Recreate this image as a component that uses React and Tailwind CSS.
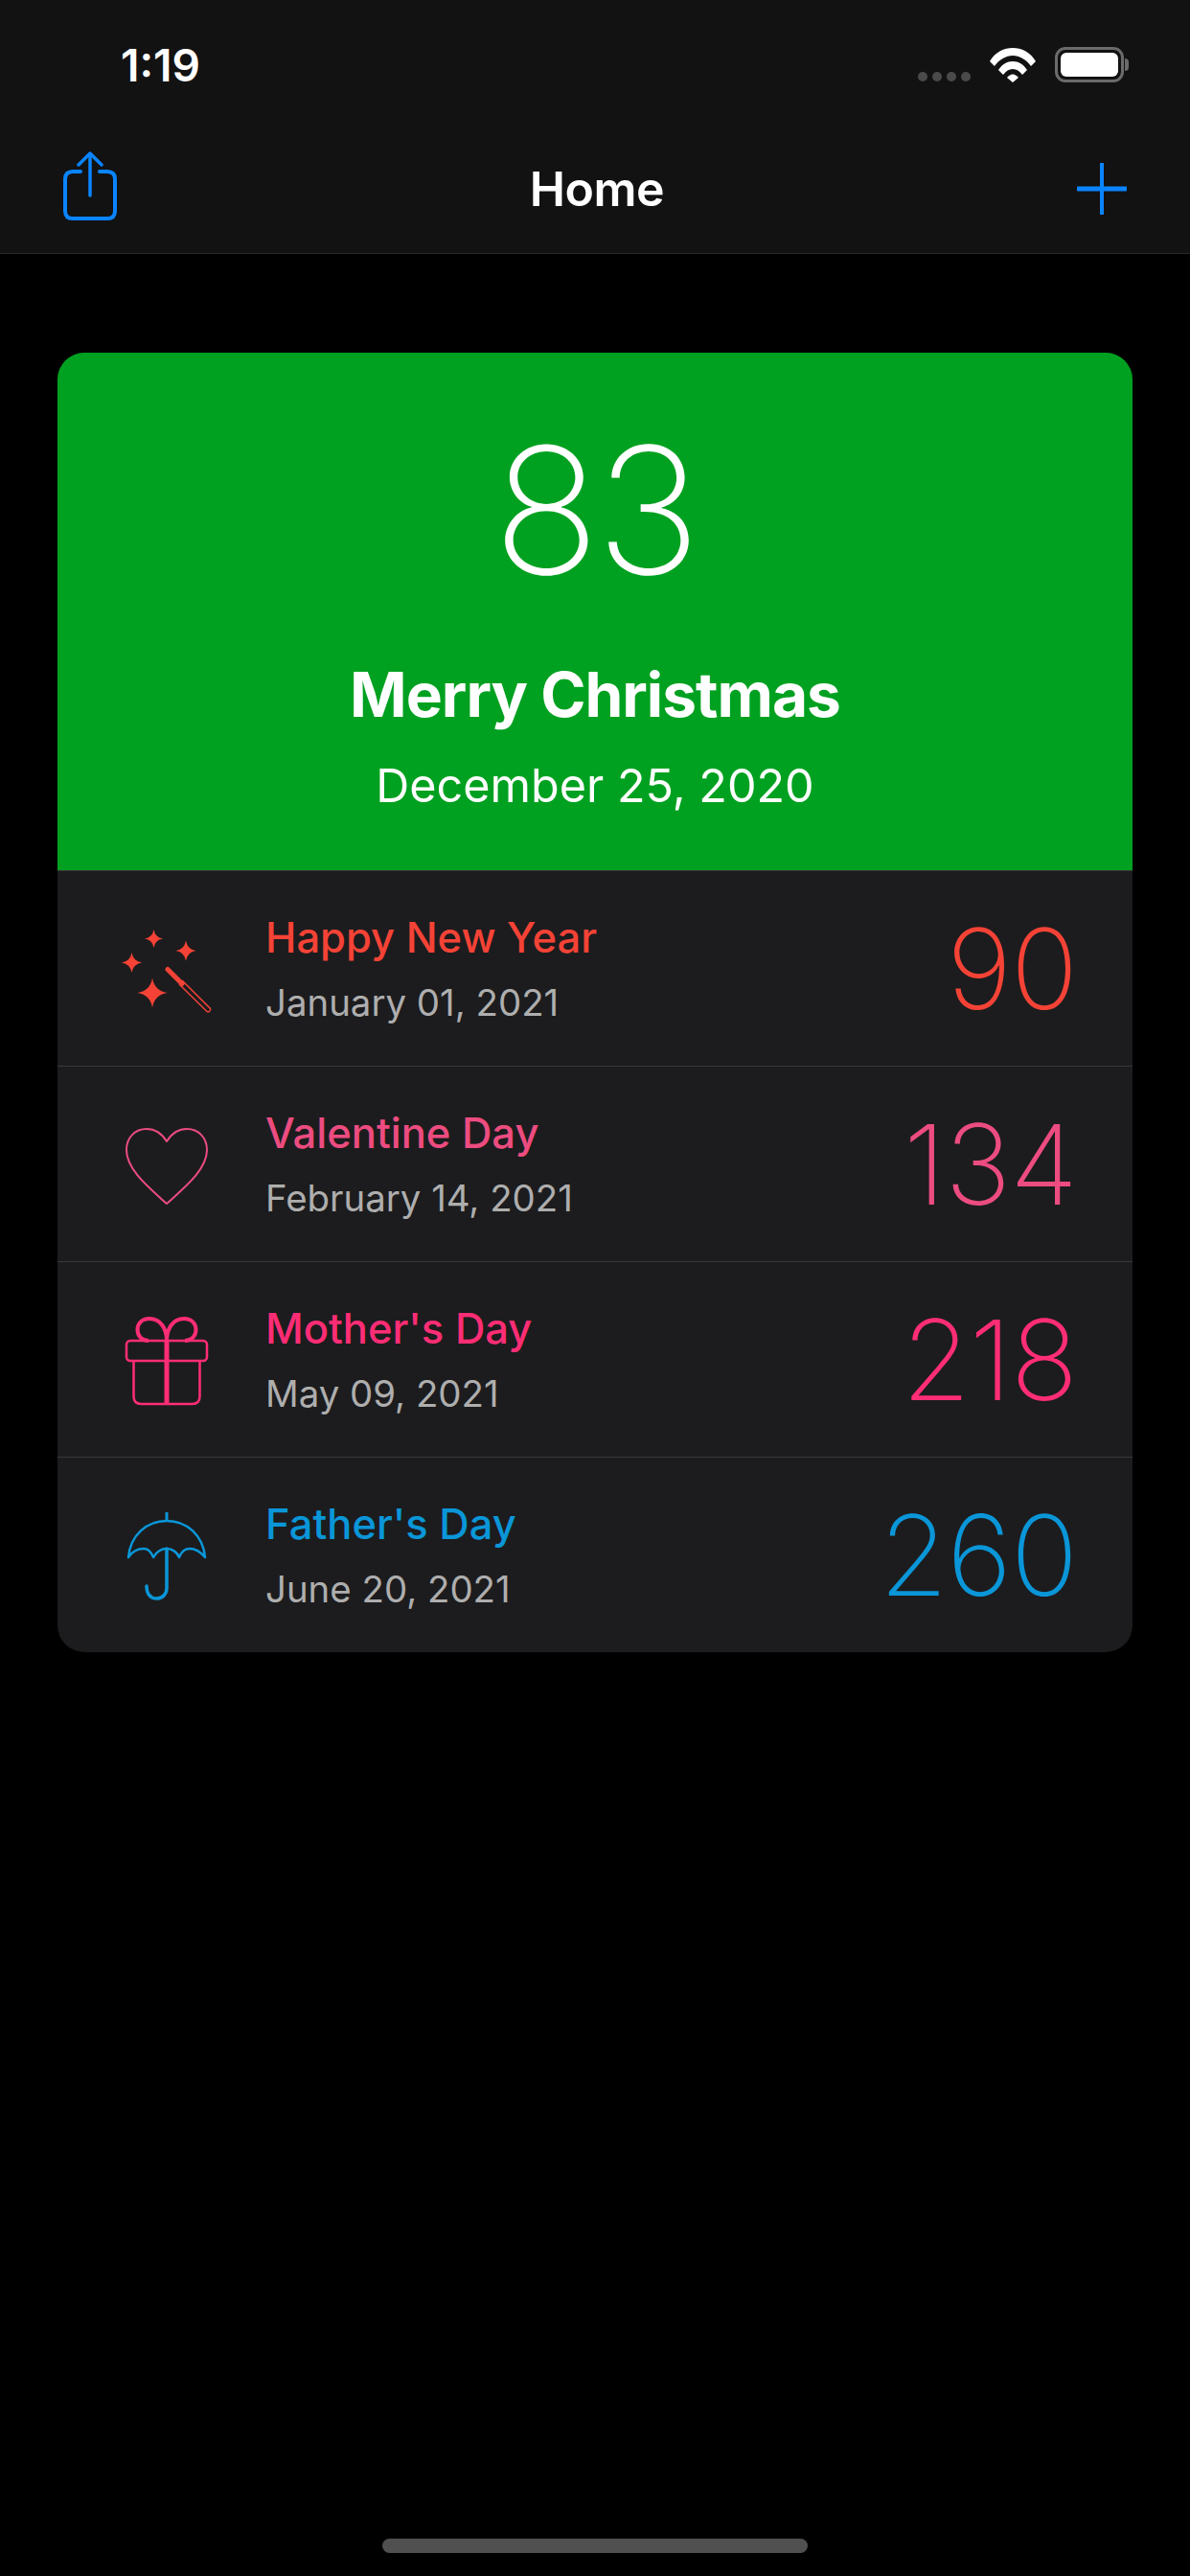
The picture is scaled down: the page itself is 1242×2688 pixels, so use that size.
import React from "react"

const events = [
  { id: 1, title: "Happy New Year", date: "January 01, 2021", days: 90, color: "text-[#f44336]", icon: "wand" },
  { id: 2, title: "Valentine Day", date: "February 14, 2021", days: 134, color: "text-[#ec4c80]", icon: "heart" },
  { id: 3, title: "Mother's Day", date: "May 09, 2021", days: 218, color: "text-[#ff2d75]", icon: "gift" },
  { id: 4, title: "Father's Day", date: "June 20, 2021", days: 260, color: "text-[#0a96d8]", icon: "umbrella" },
]

const sparkle = (x, y, r) =>
  `M${x} ${y - r} Q${x + r * 0.14} ${y - r * 0.14} ${x + r} ${y} Q${x + r * 0.14} ${y + r * 0.14} ${x} ${y + r} Q${x - r * 0.14} ${y + r * 0.14} ${x - r} ${y} Q${x - r * 0.14} ${y - r * 0.14} ${x} ${y - r}Z`

function EventIcon({ name }) {
  return (
    <svg viewBox="0 0 100 100" className="w-[100px] h-[100px] shrink-0" fill="none" stroke="currentColor" strokeWidth="2">
      {name === "wand" && (
        <g>
          <path d={sparkle(35, 75, 15.5)} fill="currentColor" stroke="none" />
          <path d={sparkle(13.5, 43.5, 10.5)} fill="currentColor" stroke="none" />
          <path d={sparkle(36.5, 18.5, 9.5)} fill="currentColor" stroke="none" />
          <path d={sparkle(70, 31, 10.5)} fill="currentColor" stroke="none" />
          <path d="M51 50.5L66 65.5" strokeWidth="5" strokeLinecap="round" />
          <path d="M66 62L95.5 91.5Q96 93.5 94.5 94.5Q93 95 92 94.5L63 66" strokeWidth="1.5" />
        </g>
      )}
      {name === "heart" && (
        <path d="M50 26C45 18 38 13 29 13C17 13 8 22 8 35C8 55 30 73 50 91C70 73 92 55 92 35C92 22 83 13 71 13C62 13 55 18 50 26Z" strokeLinejoin="round" />
      )}
      {name === "gift" && (
        <g>
          <rect x="8" y="30" width="84" height="21" rx="4" strokeWidth="2.5" />
          <path d="M15.5 51V88Q15.5 96 23.5 96H76.5Q84.5 96 84.5 88V51" strokeWidth="2.5" />
          <path d="M50 30V96" strokeWidth="5" />
          <path d="M50 30C50 18 44 7 32 7C24 7 19.5 12 19.5 18.5C19.5 25 24 30 31 30" strokeWidth="4" />
          <path d="M50 30C50 18 56 7 68 7C76 7 80.5 12 80.5 18.5C80.5 25 76 30 69 30" strokeWidth="4" />
        </g>
      )}
      {name === "umbrella" && (
        <g>
          <path d="M50 5V14" strokeWidth="3" />
          <path d="M10 52C12 29 29 14 50 14C71 14 88 29 90 52C85 46 79 43 74 43C69 43 65 47 63 52C61 47 56 43 50 43C44 43 39 47 36 52C34 47 31 43 26 43C20 43 14 46 10 52Z" strokeLinejoin="round" strokeWidth="2.5" />
          <path d="M50 43V84C50 91 45 95 39.5 95C33.5 95 29 91 29 82" strokeWidth="3.5" strokeLinecap="round" />
        </g>
      )}
    </svg>
  )
}

function StatusBar() {
  return (
    <div className="h-[132px] flex items-start justify-between">
      <span className="ml-[126px] mt-[38px] text-[46px] leading-[60px] font-semibold text-white">1:19</span>
      <div className="flex items-end mt-[49px] mr-[64px]">
        <div className="flex gap-[5px] mb-[1px] mr-[20px]">
          <span className="w-[10px] h-[10px] rounded-full bg-[#4a4a4a]" />
          <span className="w-[10px] h-[10px] rounded-full bg-[#4a4a4a]" />
          <span className="w-[10px] h-[10px] rounded-full bg-[#4a4a4a]" />
          <span className="w-[10px] h-[10px] rounded-full bg-[#4a4a4a]" />
        </div>
        <svg viewBox="0 0 48 36" className="w-[48px] h-[36px] mr-[20px]" fill="white">
          <path d="M0 14C6 4 15 0 24 0C33 0 42 4 48 14L43 19C38 12 31 8 24 8C17 8 10 12 5 19Z" />
          <path d="M9 23C13 17 18 14 24 14C30 14 35 17 39 23L34 28C31 24 28 22 24 22C20 22 17 24 14 28Z" />
          <path d="M18 31C20 29 22 27.5 24 27.5C26 27.5 28 29 30 31L24 36Z" />
        </svg>
        <div className="flex items-center">
          <div className="w-[72px] h-[37px] rounded-[11px] border-[3px] border-[#6b6b6b] p-[3px]">
            <div className="w-full h-full rounded-[6px] bg-white" />
          </div>
          <div className="w-[4px] h-[13px] ml-[1px] rounded-r-full bg-[#6b6b6b]" />
        </div>
      </div>
    </div>
  )
}

function NavBar() {
  return (
    <div className="h-[132px] pl-[66px] pr-[66px] flex items-center justify-between relative">
      <svg viewBox="0 0 56 72" className="w-[56px] h-[72px] -mt-[8px]" fill="none" stroke="#0a84ff" strokeWidth="4" strokeLinecap="round" strokeLinejoin="round">
        <path d="M18 21H10Q2 21 2 29V62Q2 70 10 70H46Q54 70 54 62V29Q54 21 46 21H38" />
        <path d="M28 46V3" strokeWidth="3.5" />
        <path d="M16 14L28 2L40 14" strokeWidth="3.5" />
      </svg>
      <span className="-mt-[3px] text-[50px] leading-[60px] font-semibold text-white tracking-[-0.5px]">Home</span>
      <svg viewBox="0 0 52 54" className="w-[52px] h-[54px] -mt-[3px]" stroke="#0a84ff" fill="none">
        <path d="M26 1V53" strokeWidth="4" strokeLinecap="round" />
        <path d="M1 27H51" strokeWidth="5" strokeLinecap="round" />
      </svg>
    </div>
  )
}

function EventRow({ event }) {
  return (
    <div className="h-[204px] flex items-center pl-[64px] pr-[58px] border-t border-[#38383a] first:border-t-0">
      <div className={`flex items-center ${event.color}`}>
        <EventIcon name={event.icon} />
      </div>
      <div className="ml-[53px] flex-1 flex flex-col">
        <span className={`text-[43.5px] leading-[50px] font-medium ${event.color}`}>{event.title}</span>
        <span className="mt-[20px] text-[38.4px] leading-[46px] text-[#aeaeae]">{event.date}</span>
      </div>
      <span className={`text-[116px] leading-[130px] tracking-[-1px] font-[170] ${event.color}`}>{event.days}</span>
    </div>
  )
}

export default function App() {
  return (
    <div className="min-h-[2688px] bg-black flex flex-col font-['Inter',sans-serif]">
      <header className="h-[265px] bg-[#121212] border-b border-[#2a2a2a]">
        <StatusBar />
        <NavBar />
      </header>

      <main className="mt-[103px] mx-[60px] rounded-[28px] overflow-hidden bg-[#1c1c1e]">
        <section className="h-[540px] bg-[#00a120] flex flex-col items-center text-white">
          <span className="mt-[64px] text-[184px] leading-[200px] font-[170] tracking-[-4px]">83</span>
          <span className="mt-[55px] text-[64px] leading-[76px] font-bold tracking-[-1px]">Merry Christmas</span>
          <span className="mt-[28px] text-[48.5px] leading-[58px]">December 25, 2020</span>
        </section>
        {events.map((event) => (
          <EventRow key={event.id} event={event} />
        ))}
      </main>

      <div className="mt-auto mb-[24px] mx-auto w-[444px] h-[15px] rounded-full bg-[#505050]" />
    </div>
  )
}
